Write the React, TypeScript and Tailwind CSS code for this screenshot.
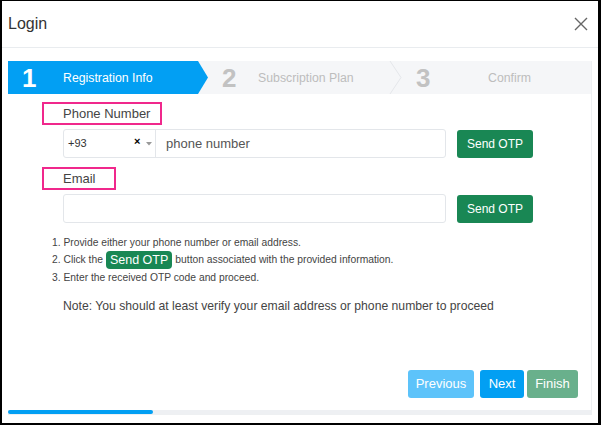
import React from "react";

const SendBtn = () => (
  <button className="h-[28px] w-[76px] rounded-[3px] bg-[#198754] text-[12px] text-white">Send OTP</button>
);

export default function App() {
  return (
    <div
      className="w-[601px] h-[425px] bg-black pl-[2px] pt-[1px] pr-[3px] pb-[2px]"
      style={{ fontFamily: '"Liberation Sans", Arial, sans-serif' }}
    >
      <div className="w-full h-full bg-white flex flex-col">
        <div className="h-[47px] flex items-center justify-between pl-[6px] pr-[8px] border-b border-[#e9ecef]">
          <span className="text-[16px] text-[#333]">Login</span>
          <svg width="16" height="16" viewBox="0 0 16 16" className="mr-[1px]">
            <path d="M2 2 L14 14 M14 2 L2 14" stroke="#666" strokeWidth="1.4" />
          </svg>
        </div>
        <div className="flex-1 flex flex-col px-[6px] pt-[13px]">
          <div className="flex flex-col h-[354px] border-r border-b border-[#eef0f2]">
            {/* steps */}
            <div className="relative h-[33px] bg-[#f5f6f8] flex items-center">
              <div className="absolute left-0 top-0 h-[33px] w-[200px] bg-[#029ff3]" style={{ clipPath: "polygon(0 0, 190px 0, 200px 50%, 190px 100%, 0 100%)" }} />
              <svg className="absolute left-[381px] top-0" width="14" height="33" viewBox="0 0 14 33">
                <path d="M1 0 L12 16.5 L1 33" fill="none" stroke="#e4e6ea" strokeWidth="1" />
              </svg>
              <span className="absolute left-[14px] top-[3px] text-[26px] font-bold text-white leading-[28px]">1</span>
              <span className="absolute left-[55px] top-[8px] text-[12.3px] text-white">Registration Info</span>
              <span className="absolute left-[214px] top-[3px] text-[26px] font-bold text-[#c2c2c2] leading-[28px]">2</span>
              <span className="absolute left-[250px] top-[8px] text-[12.3px] text-[#bdbdbd]">Subscription Plan</span>
              <span className="absolute left-[408px] top-[3px] text-[26px] font-bold text-[#c2c2c2] leading-[28px]">3</span>
              <span className="absolute left-[480px] top-[8px] text-[12.3px] text-[#bdbdbd]">Confirm</span>
            </div>
            {/* form */}
            <div className="flex flex-col pl-[34px] pt-[8px]">
              <div className="w-[120px] h-[23px] border-2 border-[#f0288c] pl-[19px] flex items-center text-[13px] text-[#444]">Phone Number</div>
              <div className="flex items-center mt-[4px] ml-[21px]">
                <div className="flex h-[29px] w-[383px] border border-[#e3e6ea] rounded-[3px]">
                  <div className="w-[92px] flex items-center pl-[4px] pr-[6px] border-r border-[#e3e6ea] text-[11px] text-[#333] relative">
                    <span>+93</span>
                    <span className="absolute left-[70px] top-[3px] text-[11px] font-bold text-black">×</span>
                    <svg className="absolute left-[82px] top-[12px]" width="6" height="4" viewBox="0 0 6 4"><path d="M0 0 L6 0 L3 3.5 Z" fill="#999" /></svg>
                  </div>
                  <div className="flex items-center pl-[10px] text-[13px] text-[#555]">phone number</div>
                </div>
                <div className="ml-[11px]"><SendBtn /></div>
              </div>
              <div className="w-[74px] h-[23px] border-2 border-[#f0288c] pl-[19px] flex items-center text-[13px] text-[#444] mt-[9px]">Email</div>
              <div className="flex items-center mt-[4px] ml-[21px]">
                <div className="h-[29px] w-[383px] border border-[#e3e6ea] rounded-[3px]" />
                <div className="ml-[11px]"><SendBtn /></div>
              </div>
              <div className="mt-[11px] ml-[10px] text-[10.3px] text-[#444] flex flex-col">
                <div className="h-[17px] flex items-center">1. Provide either your phone number or email address.</div>
                <div className="h-[18px] flex items-center">
                  2. Click the
                  <span className="mx-[3px] h-[18px] px-[4px] rounded-[4px] bg-[#198754] text-white text-[12.5px] flex items-center">Send OTP</span>
                  button associated with the provided information.
                </div>
                <div className="h-[17px] flex items-center">3. Enter the received OTP code and proceed.</div>
              </div>
              <div className="mt-[11px] ml-[21px] text-[12.2px] text-[#444]">Note: You should at least verify your email address or phone number to proceed</div>
            </div>
            <div className="flex-1" />
            <div className="flex justify-end pr-[13px] mb-[12px]">
              <button className="h-[28px] w-[66px] rounded-[3px] bg-[#5dc3fa] text-white text-[13px]">Previous</button>
              <button className="h-[28px] w-[44px] rounded-[3px] bg-[#029ff3] text-white text-[13px] ml-[6px]">Next</button>
              <button className="h-[28px] w-[51px] rounded-[3px] bg-[#69b08c] text-white text-[13px] ml-[3px]">Finish</button>
            </div>
            <div className="h-[4px] bg-[#eef0f3] flex">
              <div className="w-[145px] h-full bg-[#029ff3] rounded-[2px]" />
            </div>
          </div>
        </div>
      </div>
    </div>
  );
}
